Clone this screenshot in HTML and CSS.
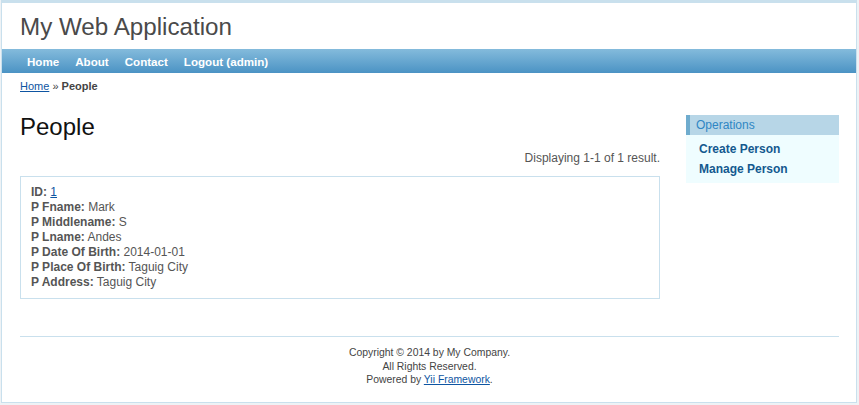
FILE: index.html
```html
<!DOCTYPE html>
<html lang="en">
<head>
<meta charset="utf-8">
<title>My Web Application - People</title>
<link rel="stylesheet" href="styles.css">
</head>
<body>
<div class="page">
  <header class="header">
    <div class="logo">My Web Application</div>
  </header>
  <nav class="mainmenu">
    <ul>
      <li><a href="#">Home</a></li>
      <li><a href="#">About</a></li>
      <li><a href="#">Contact</a></li>
      <li><a href="#">Logout (admin)</a></li>
    </ul>
  </nav>
  <div class="breadcrumbs"><a href="#">Home</a> &raquo; <span>People</span></div>
  <div class="main-row">
    <div class="content">
      <h1>People</h1>
      <div class="summary">Displaying 1-1 of 1 result.</div>
      <div class="view">
        <div><b>ID:</b> <a href="#">1</a></div>
        <div><b>P Fname:</b> Mark</div>
        <div><b>P Middlename:</b> S</div>
        <div><b>P Lname:</b> Andes</div>
        <div><b>P Date Of Birth:</b> 2014-01-01</div>
        <div><b>P Place Of Birth:</b> Taguig City</div>
        <div><b>P Address:</b> Taguig City</div>
      </div>
    </div>
    <aside class="sidebar">
      <div class="portlet-decoration">Operations</div>
      <ul class="portlet-content">
        <li><a href="#">Create Person</a></li>
        <li><a href="#">Manage Person</a></li>
      </ul>
    </aside>
  </div>
  <footer class="footer">
    Copyright &copy; 2014 by My Company.<br>
    All Rights Reserved.<br>
    Powered by <a href="#">Yii Framework</a>.
  </footer>
</div>
</body>
</html>
```
FILE: styles.css
```css
html, body {
  margin: 0;
  padding: 0;
}
body {
  background: #eef2f5;
  font-family: "Liberation Sans", Arial, sans-serif;
  color: #555;
}
.page {
  margin: 0 2px 0 1px;
  background: #fff;
  border: 1px solid #c9e0ed;
  border-top: none;
}
.header {
  border-top: 3px solid #c9e0ed;
}
.logo {
  padding: 10px 18px 8px;
  font-size: 24.2px;
  line-height: 28px;
  color: #4a4a4a;
}
.mainmenu {
  background: linear-gradient(#84bbdc, #4b93c4);
  height: 24px;
}
.mainmenu ul {
  list-style: none;
  margin: 0;
  padding: 0 0 0 17px;
  display: flex;
}
.mainmenu a {
  display: block;
  padding: 2px 8px 0;
  color: #fff;
  font-size: 11.6px;
  font-weight: bold;
  line-height: 22px;
  text-decoration: none;
}
.breadcrumbs {
  padding: 6px 18px 4px;
  font-size: 11px;
  line-height: 15px;
  color: #444;
}
.breadcrumbs a {
  color: #0e55a2;
}
.breadcrumbs span {
  font-weight: bold;
}
.main-row {
  display: flex;
  gap: 26px;
  padding: 17px 17px 0 18px;
  align-items: flex-start;
}
.content {
  width: 640px;
}
h1 {
  margin: 0 0 12px;
  font-size: 24px;
  font-weight: normal;
  line-height: 24px;
  color: #111;
}
.summary {
  text-align: right;
  font-size: 12px;
  line-height: 15px;
  margin-bottom: 10px;
  color: #555;
}
.view {
  border: 1px solid #c9e0ed;
  padding: 8px 10px;
  font-size: 12px;
  line-height: 15px;
  color: #555;
}
.view a {
  color: #0e55a2;
}
.sidebar {
  width: 153px;
}
.portlet-decoration {
  background: #b7d6e7;
  border-left: 4px solid #6facce;
  padding: 3px 6px;
  font-size: 12px;
  line-height: 14px;
  color: #2f86c4;
}
.portlet-content {
  list-style: none;
  margin: 0;
  background: #effdff;
  padding: 4px 0 4px 13px;
}
.portlet-content a {
  display: block;
  font-size: 12px;
  font-weight: bold;
  line-height: 20px;
  color: #14598f;
  text-decoration: none;
}
.footer {
  margin: 37px 17px 0 18px;
  border-top: 1px solid #c9e0ed;
  padding: 9px 0 15px;
  text-align: center;
  font-size: 10.4px;
  line-height: 13.5px;
  color: #444;
}
.footer a {
  color: #0e55a2;
}
```
